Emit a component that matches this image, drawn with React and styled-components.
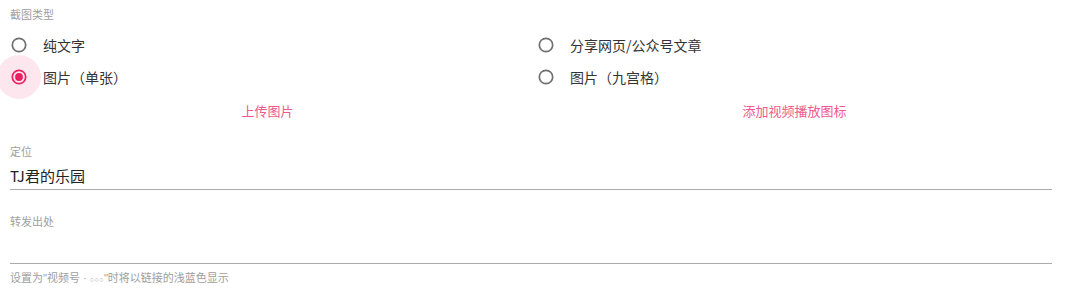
import styled, { createGlobalStyle } from 'styled-components';

const Global = createGlobalStyle`
  body {
    margin: 0;
    background: #ffffff;
    font-family: "Noto Sans CJK SC", "Noto Sans", sans-serif;
  }
`;

const Form = styled.div`
  width: 1042px;
  padding: 6px 28px 0 10px;
`;

const FieldLabel = styled.div`
  font-size: 11px;
  line-height: 16px;
  color: #9e9e9e;
  margin-top: ${(p) => p.$top || 0}px;
`;

const RadioGrid = styled.div`
  display: grid;
  grid-template-columns: 1fr 1fr;
  column-gap: 12px;
  margin-top: 7px;
`;

const RadioRow = styled.label`
  display: flex;
  align-items: center;
  height: 32px;
  cursor: pointer;
`;

const IconBox = styled.span`
  position: relative;
  width: 18px;
  height: 18px;
  display: flex;
  align-items: center;
  justify-content: center;
  margin-right: 15px;
`;

const Ripple = styled.span`
  position: absolute;
  left: -13px;
  top: -13px;
  width: 44px;
  height: 44px;
  border-radius: 50%;
  background: #fde6ee;
`;

const Svg = styled.svg`
  position: relative;
  display: block;
`;

const RadioText = styled.span`
  font-size: 14px;
  color: #333333;
  line-height: 20px;
`;

const ButtonRow = styled.div`
  display: grid;
  grid-template-columns: 1fr 1fr;
  column-gap: 12px;
  margin-top: 8px;
`;

const TextButton = styled.button`
  justify-self: center;
  border: none;
  background: none;
  padding: 0;
  font-family: inherit;
  font-size: 13px;
  line-height: 20px;
  color: #ee5a8d;
  cursor: pointer;
`;

const InputLine = styled.div`
  margin-top: ${(p) => p.$top || 0}px;
  min-height: ${(p) => p.$height || 20}px;
  padding-bottom: 3px;
  border-bottom: 1px solid #ababab;
  font-size: 15px;
  line-height: 20px;
  color: #222222;
  box-sizing: border-box;
`;

const Helper = styled.div`
  margin-top: 5px;
  font-size: 11px;
  line-height: 16px;
  color: #9e9e9e;
`;

const Latin = styled.span`
  font-family: "Liberation Sans", sans-serif;
  font-size: ${(p) => p.$size || 11}px;
  letter-spacing: ${(p) => p.$spacing || 0}px;
`;

function Radio({ checked, label }) {
  return (
    <RadioRow>
      <IconBox>
        {checked && <Ripple />}
        <Svg width="18" height="18" viewBox="0 0 18 18">
          <circle
            cx="9"
            cy="9"
            r="6.7"
            fill="none"
            stroke={checked ? '#e91e63' : '#6f6f6f'}
            strokeWidth="1.7"
          />
          {checked && <circle cx="9" cy="9" r="3.9" fill="#e91e63" />}
        </Svg>
      </IconBox>
      <RadioText>{label}</RadioText>
    </RadioRow>
  );
}

export default function App() {
  return (
    <>
      <Global />
      <Form>
        <FieldLabel>截图类型</FieldLabel>
        <RadioGrid>
          <Radio label="纯文字" />
          <Radio label="分享网页/公众号文章" />
          <Radio label="图片（单张）" checked />
          <Radio label="图片（九宫格）" />
        </RadioGrid>
        <ButtonRow>
          <TextButton>上传图片</TextButton>
          <TextButton>添加视频播放图标</TextButton>
        </ButtonRow>
        <FieldLabel $top={22}>定位</FieldLabel>
        <InputLine $top={7} $height={24}>TJ君的乐园</InputLine>
        <FieldLabel $top={23}>转发出处</FieldLabel>
        <InputLine $height={35} />
        <Helper>
          设置为<Latin>"</Latin>视频号<Latin> · </Latin>
          <Latin $size={7} $spacing={0.5}>○○○</Latin>
          <Latin>"</Latin>时将以链接的浅蓝色显示
        </Helper>
      </Form>
    </>
  );
}
